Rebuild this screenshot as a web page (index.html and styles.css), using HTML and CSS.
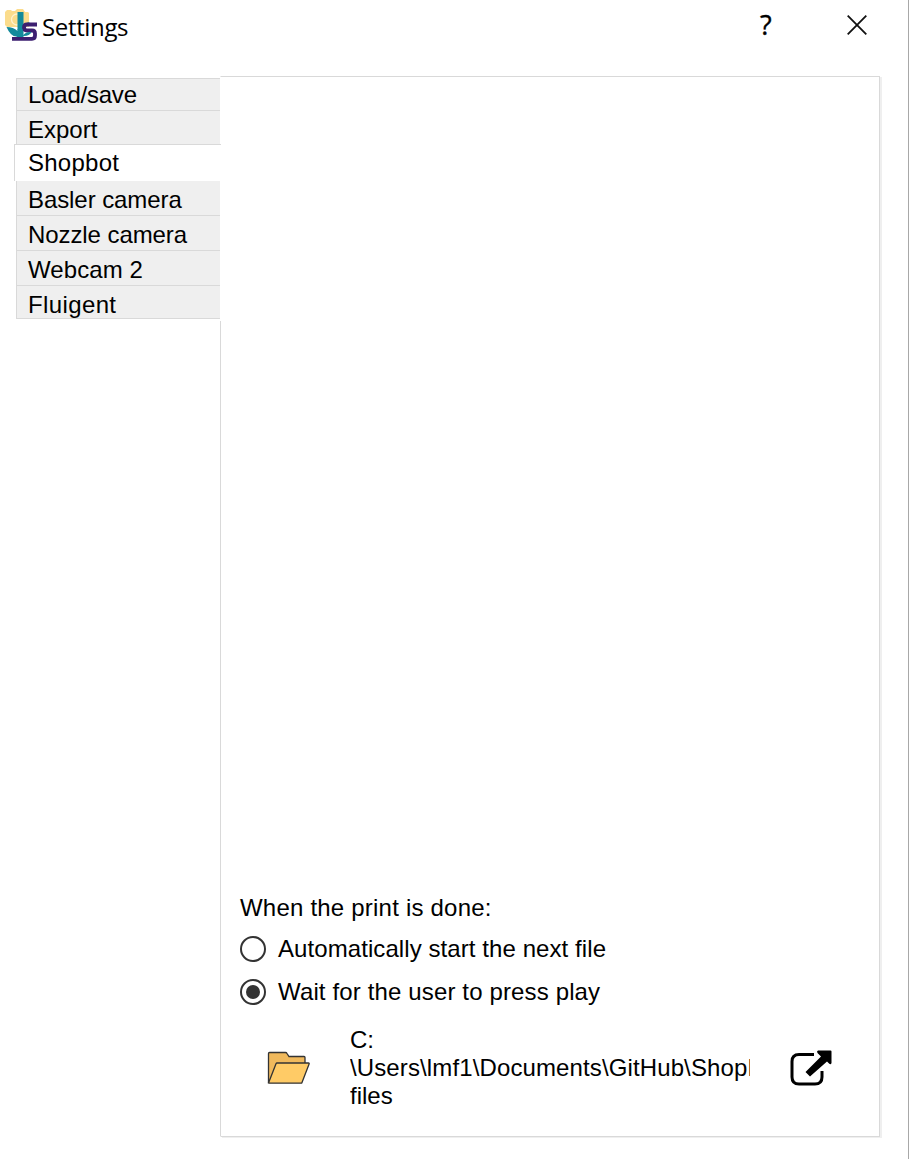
FILE: index.html
```html
<!DOCTYPE html>
<html lang="en">
<head>
<meta charset="utf-8">
<title>Settings</title>
<link rel="stylesheet" href="styles.css">
</head>
<body>
<div class="window">
  <header class="titlebar">
    <svg class="logo" viewBox="0 0 32 32">
      <path fill="#fbdc8c" d="M0 3l2-2h4l1 1h3l2-2h6l2 3h3l1 1v14H2l-2-2z"/>
      <circle cx="12" cy="10.500" r="5.500" fill="none" stroke="#fff3d0" stroke-width="1.300"/>
      <path fill="#138a9b" d="M12.500 3h6v26h-5q-1 0-2-1.500-6 0-10-9.500 7 0 11 4zM18.500 19q0-5 6-6l-1 3z"/>
      <path fill="none" stroke="#3c1f70" stroke-width="3.800" d="M32 15.500H22q-3 0-3 3t3 3H27q3 0 3 3v2q0 3.300-3 3.300H7"/>
      <path fill="#138a9b" d="M12.500 20h5v8h-4zM17.500 27q3-4.500 9-4-2 4.500-9 4z"/>
    </svg>
    <h1 class="title">Settings</h1>
    <span class="help">?</span>
    <svg class="close" viewBox="0 0 20 20"><path d="M.7.7l18.6 18.6M19.3.7L.7 19.3"/></svg>
  </header>
  <main class="content">
    <nav class="tabs">
      <div class="tab first"><span class="load">Load/save</span></div>
      <div class="tab"><span>Export</span></div>
      <div class="tab selected"><span class="shopbot">Shopbot</span></div>
      <div class="tab after"><span class="camera">Basler camera</span></div>
      <div class="tab"><span class="camera">Nozzle camera</span></div>
      <div class="tab"><span class="webcam">Webcam 2</span></div>
      <div class="tab last"><span class="fluigent">Fluigent</span></div>
    </nav>
    <section class="panel">
      <p class="heading">When the print is done:</p>
      <div class="option"><i class="radio"></i><span class="auto">Automatically start the next file</span></div>
      <div class="option second"><i class="radio checked"></i><span class="wait">Wait for the user to press play</span></div>
      <div class="folder-row">
        <svg class="folder" viewBox="0 0 44 34">
          <path fill="#f0b95c" d="M1.500 32V2.500q0-1 1-1h16q1 0 1.500 1l2 3h15q1 0 1 1V13"/>
          <path fill="#ffcb66" d="M1.500 32L9 12.700q.3-.7 1-.7h31.500q1 0 .6 1L35 31.500q-.2.700-1 .700H2z"/>
        </svg>
        <div class="path">C:<br><span class="directory">\Users\lmf1\Documents\GitHub\ShopBot</span><br>files</div>
        <svg class="open" viewBox="0 0 42 36">
          <path fill="none" stroke="#000" stroke-width="3" d="M24 4.500H9Q2 4.500 2 11.500V27q0 7 7 7h16q7 0 7-7v-6"/>
          <path d="M28 .5h12.500q1 0 1 1V13q-.6 2-2.200.8L37 11.500 20 26.500l-4.500-4.500L31 6.500 27.500 3q-1.200-2 .5-2.500z"/>
        </svg>
      </div>
    </section>
  </main>
</div>
</body>
</html>
```

FILE: styles.css
```css
* { box-sizing: border-box; }
body {
  margin: 0;
  background: #fff;
  color: #000;
  font-family: "Liberation Sans", Arial, sans-serif;
  font-size: 24px;
  line-height: 28px;
}
.window {
  width: 909px;
  height: 1159px;
  border-right: 1px solid #a8a8a8;
  overflow: hidden;
}
.titlebar {
  display: flex;
  align-items: flex-start;
  height: 76px;
  padding-left: 5px;
}
.logo { width: 32px; height: 32px; margin-top: 9px; }
.title {
  width: 100px;
  margin: 10px 0 0 5px;
  font: 400 24px/34px "Open Sans", "Noto Sans", sans-serif;
  letter-spacing: -.35px;
}
.help {
  width: 16px;
  margin: 8px 0 0 618px;
  font: 400 27px/34px "Open Sans", "Noto Sans", sans-serif;
  -webkit-text-stroke: .4px #000;
}
.close {
  width: 20px;
  height: 20px;
  margin: 15px 0 0 71px;
  stroke: #111;
  stroke-width: 1.8;
}
.content { display: flex; height: 1062px; }
.tabs { width: 220px; padding: 2px 0 0 16px; }
.tab {
  height: 35px;
  padding: 5px 0 0 11px;
  border: 1px solid #d9d9d9;
  border-width: 1px 0 0 1px;
  background: #efefef;
  white-space: nowrap;
}
.tab.first { height: 32px; padding-top: 2px; }
.tab:nth-child(2) { height: 34px; }
.tab.selected {
  position: relative;
  width: 207px;
  height: 37px;
  margin-left: -2px;
  padding: 4px 0 0 13px;
  background: #fff;
}
.tab.after { height: 34px; border-top: 0; }
.tab.last { height: 34px; border-bottom-width: 1px; }
.load { letter-spacing: -.22px; }
.shopbot { letter-spacing: .25px; }
.camera { letter-spacing: -.08px; }
.webcam { letter-spacing: .1px; }
.fluigent { letter-spacing: .38px; }
.panel {
  width: 660px;
  height: 1061px;
  padding: 817px 0 0 19px;
  border: 1px solid #d9d9d9;
  border-left-color: transparent;
  box-shadow: 2px 1px 0 #efefef;
  background: linear-gradient(#d9d9d9, #d9d9d9) 0 245px / 1px 815px no-repeat border-box;
}
.heading { margin: 0; letter-spacing: .21px; }
.auto { letter-spacing: .08px; }
.wait { letter-spacing: .14px; }
.option { display: flex; align-items: center; height: 28px; margin-top: 13px; }
.option.second { margin-top: 15px; }
.radio {
  display: grid;
  place-items: center;
  width: 26px;
  height: 26px;
  margin-right: 12px;
  border: 2px solid #333;
  border-radius: 50%;
}
.checked::after {
  content: "";
  width: 14px;
  height: 14px;
  border-radius: 50%;
  background: #333;
}
.folder-row { display: flex; margin-top: 20px; }
.folder {
  width: 44px;
  height: 34px;
  margin: 25px 0 0 27px;
  stroke: #333;
  stroke-width: 1.3;
}
.path {
  width: 400px;
  height: 84px;
  margin-left: 39px;
  overflow: hidden;
  white-space: nowrap;
}
.directory { letter-spacing: .12px; }
.open { width: 42px; height: 36px; margin: 24px 0 0 40px; }
```
